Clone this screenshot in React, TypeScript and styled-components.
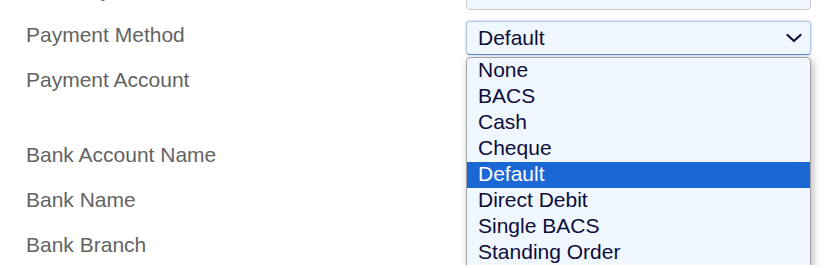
import React from 'react';
import styled, { createGlobalStyle } from 'styled-components';

const GlobalStyle = createGlobalStyle`
	html, body {
		margin: 0;
		padding: 0;
		background: #ffffff;
		overflow: hidden;
	}
	body {
		font-family: "Liberation Sans", Arial, sans-serif;
	}
`

const StyledForm = styled.div`
	margin-top: -24px;
	padding-left: 26px;
	display: flex;
	flex-direction: column;
	gap: 11px;
`

const StyledRow = styled.div<{ $tall?: boolean }>`
	display: grid;
	grid-template-columns: 440px 345px;
	align-items: start;
	min-height: ${p => p.$tall ? '64px' : '34px'};
`

const StyledLabel = styled.div`
	font-size: 21px;
	line-height: 28px;
	color: #636363;
	white-space: nowrap;
`

const StyledField = styled.div`
	position: relative;
`

const StyledInput = styled.div`
	box-sizing: border-box;
	height: 34px;
	background: #f0f7ff;
	border: 1px solid #cccccc;
	border-radius: 4px;
`

const StyledSelect = styled.div`
	box-sizing: border-box;
	height: 34px;
	padding: 0 8px 0 11px;
	display: flex;
	align-items: center;
	justify-content: space-between;
	background: #f0f7ff;
	border: 1px solid #b4c8e2;
	border-bottom-color: #5e8fcf;
	border-radius: 4px;
	box-shadow: 0 0 3px rgba(80, 130, 200, 0.45);
	font-size: 21px;
	color: #0d0d3b;
`

const StyledDropdown = styled.ul`
	position: absolute;
	top: 36px;
	left: 0;
	right: 0;
	z-index: 10;
	margin: 0;
	padding: 0 0 12px;
	list-style: none;
	background: #f0f7ff;
	border: 1px solid #a3a3a3;
	border-radius: 4px;
	box-shadow: 2px 3px 9px rgba(0, 0, 0, 0.28);
`

const StyledOption = styled.li<{ $selected?: boolean }>`
	height: 26px;
	padding-left: 11px;
	font-size: 21px;
	line-height: 24px;
	color: ${p => p.$selected ? '#ffffff' : '#0d0d3b'};
	background: ${p => p.$selected ? '#1b67d4' : 'transparent'};
`

const Chevron = () => (
	<svg width="16" height="10" viewBox="0 0 16 10" fill="none">
		<polyline points="1.5,2 8,8 14.5,2" stroke="#0d0d3b" strokeWidth="2.2" strokeLinecap="round" strokeLinejoin="round" />
	</svg>
)

const methods = ['None', 'BACS', 'Cash', 'Cheque', 'Default', 'Direct Debit', 'Single BACS', 'Standing Order']

const App = () => {
	const current = 'Default'

	return <>
		<GlobalStyle />
		<StyledForm>
			<StyledRow>
				<StyledLabel>Currency</StyledLabel>
				<StyledInput />
			</StyledRow>
			<StyledRow>
				<StyledLabel>Payment Method</StyledLabel>
				<StyledField>
					<StyledSelect>
						{current}
						<Chevron />
					</StyledSelect>
					<StyledDropdown>
						{methods.map(m => (
							<StyledOption key={m} $selected={m === current}>{m}</StyledOption>
						))}
					</StyledDropdown>
				</StyledField>
			</StyledRow>
			<StyledRow $tall>
				<StyledLabel>Payment Account</StyledLabel>
				<StyledInput />
			</StyledRow>
			<StyledRow>
				<StyledLabel>Bank Account Name</StyledLabel>
				<StyledInput />
			</StyledRow>
			<StyledRow>
				<StyledLabel>Bank Name</StyledLabel>
				<StyledInput />
			</StyledRow>
			<StyledRow>
				<StyledLabel>Bank Branch</StyledLabel>
				<StyledInput />
			</StyledRow>
		</StyledForm>
	</>
}

export default App;
